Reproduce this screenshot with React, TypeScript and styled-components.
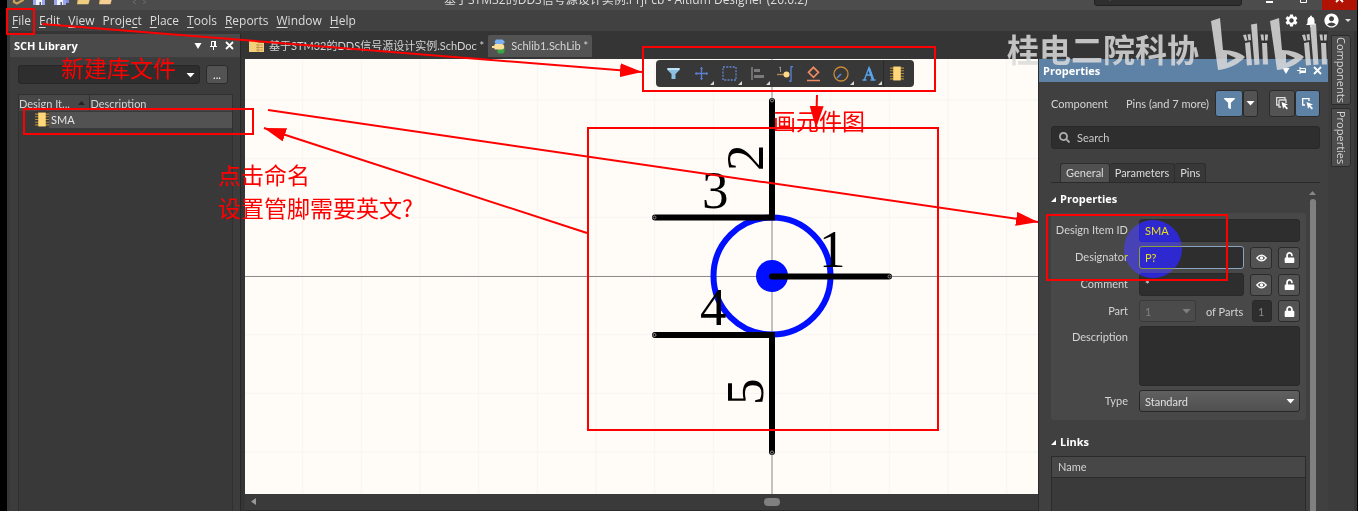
import React from "react";
import styled, { createGlobalStyle, css } from "styled-components";
import { MdSettings, MdNotifications, MdAccountCircle } from "react-icons/md";
import { FaFilter, FaSearch, FaLock, FaUnlock } from "react-icons/fa";

const Global = createGlobalStyle`
  * { box-sizing: border-box; }
  html, body { margin: 0; background: #000; }
  body, button, input, select, textarea {
    font-family: Lato, "Noto Sans CJK SC", sans-serif;
    font-size: 11px;
    color: #d4d4d4;
  }
  button { padding: 0; cursor: pointer; }
`;

const headingFont = css`
  font-family: "Open Sans", "Noto Sans CJK SC", sans-serif;
`;

/* ---------- window frame ---------- */

const Window = styled.div`
  position: relative;
  display: flex;
  flex-direction: column;
  height: 100vh;
  min-height: 440px;
  overflow: hidden;
  padding: 0 1px 0 7px;
  background: #000;
`;

const TitleBar = styled.header`
  display: flex;
  align-items: flex-end;
  justify-content: space-between;
  flex: none;
  height: 10px;
  overflow: hidden;
  background: #4c4c4c;
`;

const QuickAccess = styled.div`
  display: flex;
  gap: 8px;
  width: 437px;
  padding: 0 0 4px 4px;
  svg { display: block; }
`;

const WindowTitle = styled.div`
  ${headingFont}
  flex: 1;
  font-size: 12px;
  line-height: 20px;
  color: #dedede;
  white-space: nowrap;
`;

const TitleRight = styled.div`
  display: flex;
  align-items: flex-end;
`;

const TitleSearch = styled.label`
  display: flex;
  align-items: center;
  gap: 8px;
  width: 148px;
  height: 20px;
  margin: 0 10px 4px 0;
  padding: 0 8px;
  border: 1px solid #222;
  border-radius: 3px;
  background: #2f2f2f;
  input {
    width: 100%;
    padding: 0;
    border: 0;
    background: none;
    line-height: 16px;
  }
  input::placeholder { color: #c4c4c4; }
`;

const WindowButton = styled.button<{ $close?: boolean }>`
  display: grid;
  place-items: end center;
  width: 35px;
  height: 20px;
  padding-bottom: 7px;
  border: 0;
  background: ${(p) => (p.$close ? "#b01304" : "transparent")};
`;

const MenuBar = styled.nav`
  display: flex;
  align-items: center;
  justify-content: space-between;
  flex: none;
  height: 21px;
  padding: 0 6px 0 5px;
  background: #414141;
`;

const MenuItems = styled.div`
  display: flex;
  gap: 8px;
`;

const MenuButton = styled.button`
  ${headingFont}
  border: 0;
  background: none;
  font-size: 12px;
  line-height: 20px;
  color: #dcdcdc;
  u { text-underline-offset: 2px; }
`;

const AccountTools = styled.div`
  display: flex;
  align-items: center;
  gap: 5px;
  svg { display: block; }
`;

const IconButton = styled.button`
  display: grid;
  place-items: center;
  border: 0;
  background: none;
  color: #fff;
`;

const Workspace = styled.main`
  display: flex;
  flex: 1;
  min-height: 0;
  background: #353535;
`;

/* ---------- library panel ---------- */

const LibraryPanel = styled.aside`
  display: flex;
  flex-direction: column;
  flex: none;
  width: 234px;
  margin: 3px 4px 0 0;
  border-right: 1px solid #282828;
  border-left: 3px solid #363636;
  background: #3c3c3c;
`;

const PanelHeader = styled.div<{ $active?: boolean }>`
  display: flex;
  align-items: center;
  justify-content: space-between;
  flex: none;
  height: 23px;
  padding: 0 6px 0 4px;
  background: ${(p) => (p.$active ? "#5e82a5" : "#4a4a4a")};
  border-left: ${(p) => (p.$active ? "1px solid #2b2b2b" : "0")};
  h2 {
    ${headingFont}
    margin: 0;
    font-size: 11px;
    line-height: 20px;
    color: #fff;
  }
`;

const HeaderTools = styled.div`
  display: flex;
  gap: 7px;
`;

const LibraryPicker = styled.div`
  display: flex;
  gap: 6px;
  padding: 8px 12px 10px 8px;
`;

const SelectBox = styled.div<{ $tone: "dark" | "raised" | "disabled"; $width?: number }>`
  position: relative;
  display: flex;
  flex: ${(p) => (p.$width ? "none" : 1)};
  width: ${(p) => (p.$width ? `${p.$width}px` : "auto")};
  svg {
    position: absolute;
    top: 50%;
    right: 5px;
    margin-top: -2px;
    pointer-events: none;
  }
  select {
    width: 100%;
    height: ${(p) => (p.$tone === "dark" ? 19 : 22)}px;
    padding: 0 5px;
    appearance: none;
    border: 1px solid ${(p) => (p.$tone === "disabled" ? "#3a3a3a" : "#272727")};
    border-radius: 3px;
    opacity: 1;
    color: ${(p) => (p.$tone === "disabled" ? "#808080" : "#e0e0e0")};
    background: ${(p) =>
      p.$tone === "dark" ? "#2e2e2e" : p.$tone === "raised" ? "linear-gradient(#606060, #505050)" : "#4b4b4b"};
  }
`;

const SmallButton = styled.button<{ $on?: boolean; $width?: number; $height?: number }>`
  display: grid;
  place-items: center;
  flex: none;
  width: ${(p) => p.$width ?? 22}px;
  height: ${(p) => p.$height ?? 22}px;
  border: 1px solid #2b2b2b;
  border-radius: 3px;
  background: ${(p) => (p.$on ? "#5e82a5" : "#535353")};
  color: #fff;
`;

const LibraryBody = styled.div`
  flex: 1;
  margin: 0 7px 0 8px;
  border: 1px solid #303030;
  border-bottom: 0;
  background: #393939;
`;

const LibraryTable = styled.table`
  width: 100%;
  border-collapse: collapse;
  table-layout: fixed;
  th {
    height: 16px;
    padding: 0;
    font-weight: 400;
    line-height: 15px;
    text-align: left;
    background: #474747;
  }
  th:first-child { width: 70px; border-right: 1px solid #303030; }
  th:last-child { padding-left: 1px; }
  th svg { margin: 0 0 3px 8px; }
  td { height: 17px; padding: 0; line-height: 16px; color: #e4e4e4; }
`;

const PartCell = styled.div`
  display: flex;
  padding-left: 16px;
  span { flex: 1; padding-left: 2px; background: #525252; }
`;

/* ---------- document area ---------- */

const Editor = styled.section`
  display: flex;
  flex-direction: column;
  flex: 1;
  min-width: 0;
`;

const DocumentTabs = styled.div`
  display: flex;
  align-items: center;
  flex: none;
  height: 28px;
  padding-top: 2px;
`;

const DocumentTab = styled.button<{ $active?: boolean }>`
  display: flex;
  align-items: center;
  gap: 5px;
  height: 22px;
  padding: 0 4px;
  border: 0;
  border-radius: 2px 2px 0 0;
  background: ${(p) => (p.$active ? "#535353" : "transparent")};
  line-height: 20px;
  white-space: nowrap;
`;

const Canvas = styled.div`
  position: relative;
  flex: 1;
  min-height: 0;
  background: #fffcf8;
  > svg { display: block; width: 100%; height: 100%; }
`;

const Digit = styled.text`
  font-family: "Liberation Serif", serif;
  font-size: 53px;
  fill: #000;
`;

const ActiveBar = styled.div`
  position: absolute;
  top: 1px;
  right: 124px;
  display: flex;
  padding: 0 3px;
  border-radius: 4px;
  background: #383838;
`;

const ActiveTool = styled.button<{ $menu?: boolean; $divider?: boolean }>`
  display: grid;
  place-items: center;
  position: relative;
  width: 28px;
  height: 27px;
  border: 0;
  background: none;
  box-shadow: ${(p) => (p.$divider ? "inset 1px 0 #2a2a2a" : "none")};
  &::after {
    content: ${(p) => (p.$menu ? '""' : "none")};
    position: absolute;
    right: 1px;
    bottom: 2px;
    border-bottom: 4px solid #d8d8d8;
    border-left: 4px solid transparent;
  }
`;

const ScrollStrip = styled.div`
  display: grid;
  grid-template-columns: 527px 1fr;
  align-items: center;
  flex: none;
  height: 17px;
  padding-bottom: 1px;
  border-bottom: 1px solid #2c2c2c;
  background: #3a3a3a;
  svg { margin-left: 6px; }
`;

const ScrollThumb = styled.div`
  width: 16px;
  height: 8px;
  margin-left: -8px;
  border-radius: 4px;
  background: #808080;
`;

/* ---------- properties panel ---------- */

const RightColumn = styled.div`
  display: flex;
  flex-direction: column;
  flex: none;
  width: 290px;
  padding-top: 28px;
`;

const PropertiesPanel = styled.aside`
  position: relative;
  display: flex;
  flex-direction: column;
  flex: 1;
  min-height: 0;
  overflow: hidden;
  background: #404040;
`;

const PanelContent = styled.div`
  display: flex;
  flex-direction: column;
  flex: 1;
  min-height: 0;
  padding: 8px 8px 0 12px;
  border-left: 1px solid #2b2b2b;
`;

const FilterRow = styled.div`
  display: flex;
  align-items: center;
  gap: 6px;
  flex: none;
  height: 27px;
  > :first-child { margin-right: auto; }
  > :last-child { margin-left: 5px; }
`;

const ButtonGroup = styled.div`
  display: flex;
`;

const SearchBox = styled.label`
  display: flex;
  align-items: center;
  gap: 7px;
  flex: none;
  height: 23px;
  margin-top: 9px;
  padding: 0 7px;
  border: 1px solid #292929;
  border-radius: 3px;
  background: #2e2e2e;
  color: #b0b0b0;
  input { flex: 1; border: 0; padding: 0; background: none; }
  input::placeholder { color: #cacaca; }
`;

const PanelTabs = styled.div`
  display: flex;
  flex: none;
  margin-top: 14px;
  padding-left: 9px;
  border-bottom: 1px solid #2a2a2a;
`;

const PanelTab = styled.button<{ $active?: boolean }>`
  height: 19px;
  padding: 0 5px;
  border: 1px solid #2d2d2d;
  border-bottom: 0;
  border-radius: 3px 3px 0 0;
  background: ${(p) => (p.$active ? "#505050" : "#383838")};
  color: #dcdcdc;
  line-height: 16px;
  & + & { border-left: 0; }
`;

const ScrollArea = styled.div`
  display: flex;
  gap: 3px;
  flex: 1;
  min-height: 0;
`;

const Sections = styled.div`
  display: flex;
  flex-direction: column;
  flex: 1;
  min-width: 0;
`;

const SectionTitle = styled.h3`
  ${headingFont}
  display: flex;
  align-items: center;
  gap: 4px;
  flex: none;
  margin: 6px 0 4px;
  font-size: 11px;
  line-height: 20px;
  color: #fff;
`;

const FormCard = styled.form`
  display: grid;
  grid-template-columns: 77px minmax(0, 1fr);
  gap: 4px 11px;
  flex: none;
  margin-bottom: 6px;
  padding: 6px 6px 8px 0;
  border-radius: 3px;
  background: #484848;
`;

const FieldLabel = styled.label`
  line-height: 22px;
  text-align: right;
  white-space: nowrap;
`;

const FieldRow = styled.div`
  display: flex;
  align-items: center;
  gap: 6px;
  min-width: 0;
`;

const fieldLook = css`
  min-width: 0;
  padding: 0 5px;
  border: 1px solid #292929;
  border-radius: 3px;
  background: #2e2e2e;
  outline: none;
`;

const TextField = styled.input<{ $focus?: boolean; $narrow?: boolean }>`
  ${fieldLook}
  flex: ${(p) => (p.$narrow ? "none" : 1)};
  width: ${(p) => (p.$narrow ? "20px" : "auto")};
  height: ${(p) => (p.$narrow ? 22 : 23)}px;
  border-color: ${(p) => (p.$focus ? "#8aa4c0" : "#292929")};
  color: ${(p) => (p.$narrow ? "#888" : "#e6e6e6")};
`;

const TextArea = styled.textarea`
  ${fieldLook}
  width: 100%;
  height: 60px;
  resize: none;
`;

const PartsLabel = styled.label`
  flex: 1;
  padding-left: 4px;
  white-space: nowrap;
`;

const ClickHighlight = styled.div`
  position: absolute;
  top: 138px;
  left: 86px;
  width: 58px;
  height: 58px;
  border-radius: 50%;
  background: #0006ff;
  mix-blend-mode: difference;
  pointer-events: none;
`;

const LinksFrame = styled.div`
  flex: 1;
  border: 1px solid #2b2b2b;
  border-bottom: 0;
  background: #3a3a3a;
`;

const LinksTable = styled.table`
  width: 100%;
  border-collapse: collapse;
  th {
    height: 20px;
    padding: 0 6px;
    border-bottom: 1px solid #2b2b2b;
    font-weight: 400;
    text-align: left;
    background: #474747;
  }
`;

const VerticalScroll = styled.div`
  display: flex;
  flex-direction: column;
  align-items: center;
  gap: 4px;
  flex: none;
  width: 7px;
  margin: 8px 4px 0 0;
  &::after {
    content: "";
    flex: 1;
    width: 6px;
    border-radius: 3px 3px 0 0;
    background: #808080;
  }
`;

/* ---------- side rail ---------- */

const SideRail = styled.nav`
  display: flex;
  flex-direction: column;
  gap: 3px;
  flex: none;
  width: 29px;
  padding: 4px 3px 0 3px;
  border-right: 3px solid #363636;
  background: #3d3d3d;
`;

const RailTab = styled.button<{ $tall?: boolean }>`
  ${headingFont}
  height: ${(p) => (p.$tall ? 70 : 59)}px;
  border: 1px solid #2c2c2c;
  border-radius: 0 3px 3px 0;
  background: #4d4d4d;
  line-height: 18px;
  writing-mode: vertical-rl;
`;

/* ---------- annotations over the window ---------- */

const MarkLayer = styled.div`
  position: absolute;
  inset: 0;
  overflow: hidden;
  pointer-events: none;
  > svg { position: absolute; top: 0; left: 0; width: 100%; height: 100%; }
`;

const Note = styled.p<{ $x: number; $y: number }>`
  position: absolute;
  top: ${(p) => p.$y}px;
  left: ${(p) => p.$x}px;
  margin: 0;
  font-family: "Noto Sans CJK SC", sans-serif;
  font-size: 23px;
  line-height: 33px;
  color: #f00;
  white-space: pre;
`;

const Watermark = styled.div`
  position: absolute;
  top: 16px;
  right: 30px;
  display: flex;
  align-items: flex-end;
  gap: 11px;
  font-family: "Noto Sans CJK SC", sans-serif;
  font-size: 32px;
  font-weight: 700;
  line-height: 44px;
  color: rgba(218, 218, 218, 0.85);
  white-space: nowrap;
`;

/* ---------- icons ---------- */

const Caret = ({ color = "#fff" }: { color?: string }) => (
  <svg width="9" height="5" viewBox="0 0 9 5"><path d="M0.5 0h8L4.5 4.5z" fill={color} /></svg>
);

const DownMark = () => (
  <svg width="8" height="9" viewBox="0 0 8 9"><path d="M0.5 2h7L4 8z" fill="#fff" /></svg>
);

const Pushpin = () => (
  <svg width="9" height="9" viewBox="0 0 9 9">
    <path d="M2.5 0.5h4v5h-4zM1 5.5h7M4.5 6v3" fill="none" stroke="#fff" />
    <path d="M5 0h2v5H5z" fill="#fff" />
  </svg>
);

const SidePin = () => (
  <svg width="9" height="9" viewBox="0 0 9 9">
    <path d="M0 4.5h3M3 1v7M3 2.5h5.5v4H3" fill="none" stroke="#fff" />
    <path d="M3 4.5h6v2H3z" fill="#fff" />
  </svg>
);

const Cross = () => (
  <svg width="9" height="9" viewBox="0 0 9 9"><path d="M1 1l7 7M8 1L1 8" stroke="#fff" strokeWidth="1.8" /></svg>
);

const Chip = ({ w = 13, h = 14 }: { w?: number; h?: number }) => (
  <svg width={w} height={h} viewBox="0 0 13 14">
    <path d="M0 2h13M0 4.5h13M0 7h13M0 9.5h13M0 12h13" stroke="#b08a3a" />
    <path d="M3 0.5h7v13H3z" fill="#ffd778" />
  </svg>
);

const SchDocIcon = () => (
  <svg width="15" height="11" viewBox="0 0 15 11">
    <path d="M0 0h8l1 1.5h6V11H0z" fill="#f3cf7c" />
    <path d="M7 4h7M7 6.5h7M7 9h7M9 3v8" stroke="#b98f45" strokeWidth="0.8" />
  </svg>
);

const SchLibIcon = () => (
  <svg width="14" height="15" viewBox="0 0 14 15">
    <path d="M4 0.500h6.500l2.500 2.500-2.500 2.500H4L2.500 3z" fill="#79b1f2" />
    <path d="M7 8.500h5.500v4l-1.500 2H6.500l-1.500-2z" fill="#3aa544" />
    <path d="M3 5h6.500a2.500 2.500 0 0 1 0 5.500H3l-1-1.500H0v-2h2z" fill="#fbe09a" />
  </svg>
);

const FloppyIcon = ({ all }: { all?: boolean }) => (
  <svg width={all ? 15 : 13} height="13" viewBox={all ? "0 0 15 13" : "0 0 13 13"}>
    {all && <path d="M3 3h12v7H3z" fill="#7f8fdc" />}
    <path d="M0 0h12v12H0z" fill="#98a6ee" />
    <path d="M3 6h6v6H3z" fill="#f2f2fb" />
    <path d="M6.500 9h1.500v3H6.500z" fill="#555a80" />
  </svg>
);

const FolderIcon = ({ tone }: { tone: string }) => (
  <svg width="14" height="12" viewBox="0 0 15 12">
    <path d="M0 1h13v10H0z" fill="#b08a4c" />
    <path d="M3 3h12l-3 8.500H0z" fill={tone} />
  </svg>
);

const EyeIcon = () => (
  <svg width="11" height="8" viewBox="0 0 11 8">
    <path d="M0.800 4Q5.500-1.800 10.200 4Q5.500 9.800 0.800 4z" fill="none" stroke="#fff" strokeWidth="1.300" />
    <circle cx="5.500" cy="4" r="1.700" fill="#fff" />
  </svg>
);

const CopySelectIcon = () => (
  <svg width="13" height="13" viewBox="0 0 13 13">
    <path d="M9 3V0.700H0.700V8H3M3 3h7v3M3 3v7h2" fill="none" stroke="#ddd" strokeWidth="1.300" />
    <path d="M5.500 5l6.500 2.500-2.600 1 2.600 2.800-1.200 1.200-2.700-2.800-1 2.300z" fill="#fff" />
  </svg>
);

const SelectIcon = () => (
  <svg width="13" height="13" viewBox="0 0 13 13">
    <path d="M8 4V1.700H1.700V8H4" fill="none" stroke="#fff" strokeWidth="1.300" />
    <path d="M5.500 5l6.500 2.500-2.600 1 2.600 2.800-1.200 1.200-2.700-2.800-1 2.300z" fill="#fff" />
  </svg>
);

const Expanded = () => (
  <svg width="5" height="5" viewBox="0 0 5 5"><path d="M5 0v5H0z" fill="#fff" /></svg>
);

const toolIcons: { name: string; menu?: boolean; divider?: boolean; icon: React.ReactNode }[] = [
  {
    name: "Filter",
    icon: (
      <svg width="13" height="13" viewBox="0 0 13 13">
        <path d="M0.500 1h12v2L8.500 7v5h-4V7L0.500 3z" fill="#8cc0e0" />
        <path d="M0.500 1h12v2h-12z" fill="#c0e4f6" />
      </svg>
    ),
  },
  {
    name: "Move",
    menu: true,
    icon: (
      <svg width="13" height="13" viewBox="0 0 13 13">
        <path d="M6.500 0v13M0 6.500h13" fill="none" stroke="#5b80cf" strokeWidth="1.300" />
        <path d="M5 2l1.500-2L8 2zM5 11l1.500 2L8 11zM2 5L0 6.500 2 8zM11 5l2 1.500L11 8z" fill="#5b80cf" />
      </svg>
    ),
  },
  {
    name: "Select",
    menu: true,
    icon: (
      <svg width="15" height="15" viewBox="0 0 15 15">
        <path d="M1 1h13v13H1z" fill="none" stroke="#6384d0" strokeWidth="1.300" strokeDasharray="2 1.250" />
      </svg>
    ),
  },
  {
    name: "Align",
    menu: true,
    icon: (
      <svg width="13" height="13" viewBox="0 0 13 13">
        <path d="M1 0v13" stroke="#8e8e8e" strokeWidth="1.300" />
        <path d="M3 2h6v3H3zM3 8h10v3H3z" fill="#7a7a7a" />
      </svg>
    ),
  },
  {
    name: "Place pin",
    icon: (
      <svg width="17" height="16" viewBox="0 0 17 16">
        <path d="M2 2l1.500-1V6" fill="none" stroke="#909090" />
        <path d="M0 8.500h8" stroke="#b58b4d" strokeWidth="1.300" />
        <circle cx="9.500" cy="8.500" r="3" fill="#ffd889" />
        <path d="M16 0.700h-2v14.500h-2" fill="none" stroke="#5784dc" strokeWidth="1.300" />
      </svg>
    ),
  },
  {
    name: "Place IEEE symbol",
    icon: (
      <svg width="15" height="16" viewBox="0 0 15 16">
        <path d="M7.500 1.300l5 5-5 5-5-5zM1 14.500h13" fill="none" stroke="#f08a62" strokeWidth="1.700" />
      </svg>
    ),
  },
  {
    name: "Place arc",
    menu: true,
    icon: (
      <svg width="16" height="16" viewBox="0 0 16 16">
        <circle cx="8" cy="8" r="7" fill="none" stroke="#c98a35" strokeWidth="1.300" />
        <path d="M8 8l-4 4" stroke="#5b90dd" strokeWidth="1.400" />
      </svg>
    ),
  },
  {
    name: "Place text",
    menu: true,
    icon: (
      <svg width="14" height="15" viewBox="0 0 14 15">
        <path d="M2.500 13.500L7 1.500l4 12M4 9h5.500M0.500 14h4M8.500 14h5" fill="none" stroke="#58a4ef" strokeWidth="1.300" />
        <path d="M7 2.500l4 11" stroke="#58a4ef" strokeWidth="2.500" />
      </svg>
    ),
  },
  { name: "Place part", divider: true, icon: <Chip w={14} h={15} /> },
];

const menuNames = ["File", "Edit", "View", "Project", "Place", "Tools", "Reports", "Window", "Help"];
const accessKeys: Record<string, number> = { Project: 5 };

/* ---------- drawing of the component ---------- */

const GRID = 176 / 3;
const ORIGIN = { x: 527, y: 217 };

const Schematic = () => (
  <svg role="img" aria-label="SMA symbol">
    <g stroke="#f8f3ef">
      {Array.from({ length: 14 }, (_, i) => {
        const x = ORIGIN.x + (i - 9) * GRID;
        return <line key={i} x1={x} x2={x} y1="0" y2="100%" />;
      })}
      {Array.from({ length: 8 }, (_, i) => {
        const y = ORIGIN.y + (i - 4) * GRID;
        return <line key={i} y1={y} y2={y} x1="0" x2="100%" />;
      })}
    </g>
    <path d="M0 217.500h4000M527 0v4000" stroke="#8c8c8c" />
    <circle cx="527" cy="217" r="58.500" fill="none" stroke="#000fff" strokeWidth="6" />
    <circle cx="527" cy="217" r="16" fill="#000fff" />
    <path
      d="M527 42V158.500H410M527 217.500H644M410 276H527V393"
      fill="none"
      stroke="#000"
      strokeWidth="6"
      strokeLinecap="round"
    />
    <g fill="none" stroke="#aaa" strokeWidth="0.800">
      <circle cx="527" cy="41.500" r="1.500" />
      <circle cx="409.500" cy="158.500" r="1.500" />
      <circle cx="644.500" cy="217.500" r="1.500" />
      <circle cx="409.500" cy="276" r="1.500" />
      <circle cx="527" cy="393.500" r="1.500" />
    </g>
    <Digit x="574" y="208">1</Digit>
    <Digit x="457" y="149">3</Digit>
    <Digit x="455" y="266">4</Digit>
    <Digit transform="translate(518 112) rotate(-90)">2</Digit>
    <Digit transform="translate(518 346) rotate(-90)">5</Digit>
  </svg>
);

const arrows = [
  [42, 24, 642, 72],
  [268, 110, 1038, 222],
  [587, 233, 264, 128],
  [817, 95, 816, 128],
];

const boxes = [
  [7, 9, 27, 25],
  [24, 109, 229, 25],
  [643, 47, 292, 44],
  [588, 128, 350, 302],
  [1047, 215, 180, 65],
];

const LogoHalf = () => (
  <>
    <path
      d="M1 5L10 2L13 34C22 34 31 37 35 41C29 48 19 53 8 54zM17 38V47L26 42z"
      fillRule="evenodd"
    />
    <path d="M35 27l5-1 2 23-5 0.500zM41 8.500l6-1 2.500 41-5 0.500zM52 27h5l1 21.500h-5z" />
    <path d="M33 19l3-0.500 1.500 6-2.500 0.500zM37.500 18.500l3-0.500 0.500 6-2.500 0.500zM50.500 18.500h3l0.500 6h-2.500zM55 18.500h3l-0.500 6h-2.500z" />
  </>
);

const BilibiliLogo = () => (
  <svg width="118" height="54" viewBox="0 0 118 54" fill="rgba(218,218,218,0.85)">
    <LogoHalf />
    <g transform="translate(59 0)"><LogoHalf /></g>
  </svg>
);

const Marks = () => (
  <MarkLayer>
    <Watermark>
      <span>桂电二院科协</span>
      <BilibiliLogo />
    </Watermark>
    <svg fill="none" stroke="#f00" strokeWidth="2">
      <defs>
        <marker id="head" markerUnits="userSpaceOnUse" markerWidth="22" markerHeight="14" refX="22" refY="7" orient="auto">
          <path d="M0 0L22 7L0 14z" fill="#f00" stroke="none" />
        </marker>
      </defs>
      {boxes.map(([x, y, w, h]) => (
        <rect key={`${x}-${y}`} x={x} y={y} width={w} height={h} />
      ))}
      {arrows.map(([x1, y1, x2, y2]) => (
        <line key={`${x1}-${y1}`} x1={x1} y1={y1} x2={x2} y2={y2} markerEnd="url(#head)" />
      ))}
    </svg>
    <Note $x={61} $y={51}>新建库文件</Note>
    <Note $x={218} $y={158}>{"点击命名\n设置管脚需要英文?"}</Note>
    <Note $x={773} $y={104}>画元件图</Note>
  </MarkLayer>
);

/* ---------- page ---------- */

export default function App() {
  return (
    <Window>
      <Global />
      <TitleBar>
        <QuickAccess>
          <svg width="14" height="12" viewBox="0 0 14 12">
            <path d="M3 0v9l3 1.500L12 7V3L8 4" fill="none" stroke="#c9a25a" strokeWidth="2.200" />
          </svg>
          <FloppyIcon />
          <FloppyIcon all />
          <FolderIcon tone="#f0cd80" />
          <FolderIcon tone="#f6cf94" />
          <svg width="30" height="12" viewBox="0 0 30 12">
            <path d="M15 7l-3 2 3 2M22 7l3 2-3 2" fill="none" stroke="#6a6a6a" />
          </svg>
        </QuickAccess>
        <WindowTitle>基于STM32的DDS信号源设计实例.PrjPcb - Altium Designer (20.0.2)</WindowTitle>
        <TitleRight>
          <TitleSearch>
            <FaSearch size={9} />
            <input type="text" aria-label="Search application" placeholder="Search" />
          </TitleSearch>
          <WindowButton aria-label="Minimize">
            <svg width="7" height="2"><path d="M0 1h7" stroke="#fff" strokeWidth="2" /></svg>
          </WindowButton>
          <WindowButton aria-label="Restore">
            <svg width="9" height="9" viewBox="0 0 9 9"><path d="M0.500 3.500h6v5h-6zM2.500 3V0.500h6v5H7" fill="none" stroke="#fff" /></svg>
          </WindowButton>
          <WindowButton $close aria-label="Close"><Cross /></WindowButton>
        </TitleRight>
      </TitleBar>

      <MenuBar>
        <MenuItems>
          {menuNames.map((name) => {
            const k = accessKeys[name] ?? 0;
            return (
              <MenuButton key={name}>
                {name.slice(0, k)}<u>{name[k]}</u>{name.slice(k + 1)}
              </MenuButton>
            );
          })}
        </MenuItems>
        <AccountTools>
          <IconButton aria-label="Settings"><MdSettings size={15} /></IconButton>
          <IconButton aria-label="Notifications"><MdNotifications size={14} /></IconButton>
          <IconButton aria-label="Account"><MdAccountCircle size={17} /></IconButton>
          <svg width="6" height="4" viewBox="0 0 6 4"><path d="M0 0h6L3 3z" fill="#ddd" /></svg>
        </AccountTools>
      </MenuBar>

      <Workspace>
        <LibraryPanel>
          <PanelHeader>
            <h2>SCH Library</h2>
            <HeaderTools>
              <IconButton aria-label="Panel menu"><DownMark /></IconButton>
              <IconButton aria-label="Pin panel"><Pushpin /></IconButton>
              <IconButton aria-label="Close panel"><Cross /></IconButton>
            </HeaderTools>
          </PanelHeader>
          <LibraryPicker>
            <SelectBox $tone="dark">
              <select aria-label="Mask"><option></option></select>
              <Caret />
            </SelectBox>
            <SmallButton $height={19}>...</SmallButton>
          </LibraryPicker>
          <LibraryBody>
            <LibraryTable>
              <thead>
                <tr>
                  <th>
                    Design It...
                    <svg width="7" height="4" viewBox="0 0 7 4"><path d="M0 4h7L3.500 0z" fill="#222" /></svg>
                  </th>
                  <th>Description</th>
                </tr>
              </thead>
              <tbody>
                <tr>
                  <td colSpan={2}>
                    <PartCell><Chip w={14} h={15} /><span>SMA</span></PartCell>
                  </td>
                </tr>
              </tbody>
            </LibraryTable>
          </LibraryBody>
        </LibraryPanel>

        <Editor>
          <DocumentTabs>
            <DocumentTab><SchDocIcon />基于STM32的DDS信号源设计实例.SchDoc *</DocumentTab>
            <DocumentTab $active><SchLibIcon />Schlib1.SchLib *</DocumentTab>
          </DocumentTabs>
          <Canvas>
            <Schematic />
            <ActiveBar>
              {toolIcons.map((t) => (
                <ActiveTool key={t.name} aria-label={t.name} $menu={t.menu} $divider={t.divider}>
                  {t.icon}
                </ActiveTool>
              ))}
            </ActiveBar>
          </Canvas>
          <ScrollStrip>
            <svg width="5" height="7" viewBox="0 0 5 7"><path d="M5 0v7L0 3.500z" fill="#999" /></svg>
            <ScrollThumb />
          </ScrollStrip>
        </Editor>

        <RightColumn>
          <PanelHeader $active>
            <h2>Properties</h2>
            <HeaderTools>
              <IconButton aria-label="Properties menu"><DownMark /></IconButton>
              <IconButton aria-label="Pin properties"><SidePin /></IconButton>
              <IconButton aria-label="Close properties"><Cross /></IconButton>
            </HeaderTools>
          </PanelHeader>
          <PropertiesPanel>
            <PanelContent>
              <FilterRow>
                <span>Component</span>
                <span>Pins (and 7 more)</span>
                <ButtonGroup>
                  <SmallButton $on $width={28} $height={27} aria-label="Filter objects"><FaFilter size={11} /></SmallButton>
                  <SmallButton $width={15} $height={27} aria-label="Filter list"><Caret /></SmallButton>
                </ButtonGroup>
                <ButtonGroup>
                  <SmallButton $width={26} $height={27} aria-label="Select all"><CopySelectIcon /></SmallButton>
                  <SmallButton $on $width={25} $height={27} aria-label="Select one"><SelectIcon /></SmallButton>
                </ButtonGroup>
              </FilterRow>
              <SearchBox>
                <FaSearch size={11} />
                <input type="text" aria-label="Search properties" placeholder="Search" />
              </SearchBox>
              <PanelTabs>
                <PanelTab $active>General</PanelTab>
                <PanelTab>Parameters</PanelTab>
                <PanelTab>Pins</PanelTab>
              </PanelTabs>
              <ScrollArea>
                <Sections>
                  <SectionTitle><Expanded />Properties</SectionTitle>
                  <FormCard>
                    <FieldLabel htmlFor="item">Design Item ID</FieldLabel>
                    <FieldRow><TextField id="item" defaultValue="SMA" /></FieldRow>
                    <FieldLabel htmlFor="designator">Designator</FieldLabel>
                    <FieldRow>
                      <TextField id="designator" defaultValue="P?" $focus />
                      <SmallButton type="button" aria-label="Show designator"><EyeIcon /></SmallButton>
                      <SmallButton type="button" aria-label="Lock designator"><FaUnlock size={11} /></SmallButton>
                    </FieldRow>
                    <FieldLabel htmlFor="comment">Comment</FieldLabel>
                    <FieldRow>
                      <TextField id="comment" defaultValue="*" />
                      <SmallButton type="button" aria-label="Show comment"><EyeIcon /></SmallButton>
                      <SmallButton type="button" aria-label="Lock comment"><FaUnlock size={11} /></SmallButton>
                    </FieldRow>
                    <FieldLabel htmlFor="part">Part</FieldLabel>
                    <FieldRow>
                      <SelectBox $tone="disabled" $width={57}>
                        <select id="part" disabled><option>1</option></select>
                        <Caret color="#808080" />
                      </SelectBox>
                      <PartsLabel htmlFor="parts">of Parts</PartsLabel>
                      <TextField id="parts" defaultValue="1" readOnly $narrow />
                      <SmallButton type="button" aria-label="Lock part"><FaLock size={11} /></SmallButton>
                    </FieldRow>
                    <FieldLabel htmlFor="description">Description</FieldLabel>
                    <TextArea id="description" />
                    <FieldLabel htmlFor="type">Type</FieldLabel>
                    <SelectBox $tone="raised">
                      <select id="type"><option>Standard</option></select>
                      <Caret />
                    </SelectBox>
                  </FormCard>
                  <SectionTitle><Expanded />Links</SectionTitle>
                  <LinksFrame>
                    <LinksTable>
                      <thead><tr><th>Name</th></tr></thead>
                    </LinksTable>
                  </LinksFrame>
                </Sections>
                <VerticalScroll>
                  <svg width="7" height="4" viewBox="0 0 7 4"><path d="M0 4h7L3.500 0z" fill="#888" /></svg>
                </VerticalScroll>
              </ScrollArea>
            </PanelContent>
            <ClickHighlight />
          </PropertiesPanel>
        </RightColumn>

        <SideRail>
          <RailTab $tall>Components</RailTab>
          <RailTab>Properties</RailTab>
        </SideRail>
      </Workspace>
      <Marks />
    </Window>
  );
}
